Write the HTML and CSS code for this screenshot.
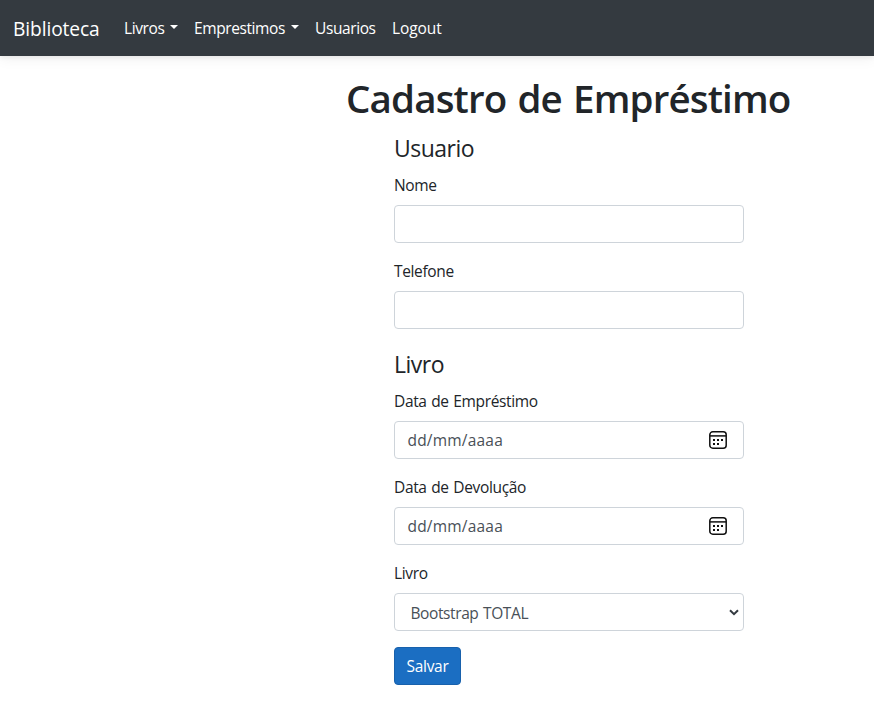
FILE: index.html
```html
<!DOCTYPE html>
<html lang="pt-BR">
<head>
<meta charset="utf-8">
<title>Biblioteca</title>
<link rel="stylesheet" href="styles.css">
</head>
<body>
<nav class="navbar">
  <a class="brand">Biblioteca</a>
  <a class="link livros"><span>Livros</span><i class="caret"></i></a>
  <a class="link emprestimos"><span>Emprestimos</span><i class="caret"></i></a>
  <a class="link usuarios"><span>Usuarios</span></a>
  <a class="link logout"><span>Logout</span></a>
</nav>
<main class="content">
  <h1>Cadastro de Empréstimo</h1>
  <form class="form">
    <h4>Usuario</h4>
    <div class="group"><label>Nome</label><input class="control" type="text"></div>
    <div class="group last"><label>Telefone</label><input class="control" type="text"></div>
    <h4>Livro</h4>
    <div class="group"><label>Data de Empréstimo</label>
      <div class="control date"><span>dd/mm/aaaa</span>
        <svg class="calendar" viewBox="0 0 20 20"><rect x="1.8" y="1.8" width="16.4" height="16.4" rx="3"/><path d="M2 5.9h16"/><path class="dots" d="M5 9h2v2H5zM9 9h2v2H9zM13 9h2v2h-2zM5 13h2v2H5zM9 13h2v2H9z"/></svg>
      </div></div>
    <div class="group"><label>Data de Devolução</label>
      <div class="control date"><span>dd/mm/aaaa</span>
        <svg class="calendar" viewBox="0 0 20 20"><rect x="1.8" y="1.8" width="16.4" height="16.4" rx="3"/><path d="M2 5.9h16"/><path class="dots" d="M5 9h2v2H5zM9 9h2v2H9zM13 9h2v2h-2zM5 13h2v2H5zM9 13h2v2H9z"/></svg>
      </div></div>
    <div class="group"><label>Livro</label>
      <div class="control select"><span>Bootstrap TOTAL</span>
        <svg class="arrow" viewBox="0 0 10 7"><path d="M1 1.2l4 4 4-4"/></svg>
      </div></div>
    <button class="save" type="button">Salvar</button>
  </form>
</main>
</body>
</html>
```

FILE: styles.css
```css
* { box-sizing: border-box; }
body { margin: 0; background: #fff; color: #212529; font: 15.5px/24px "Open Sans", "Noto Sans", sans-serif; }
.navbar { display: flex; align-items: center; height: 56px; padding-left: 13px; background: #343a40; color: #fff; box-shadow: 0 2px 4px rgba(0,0,0,.06), 0 4px 12px rgba(0,0,0,.05); white-space: nowrap; }
.brand { width: 111px; padding-top: 1px; font-size: 19.2px; line-height: 30px; letter-spacing: -.1px; }
.link { display: flex; align-items: center; letter-spacing: -.4px; }
.livros { width: 70px; }
.emprestimos { width: 121px; }
.usuarios { width: 77px; }
.logout { letter-spacing: -.1px; }
.caret { margin: -2px 16px 0 auto; border: 4.8px solid transparent; border-top-color: #fff; border-bottom: 0; }
.content { padding: 18px 0 0 346px; }
h1 { margin: 0 0 12px; font-size: 38.5px; line-height: 48px; font-weight: 600; letter-spacing: -.85px; word-spacing: 2px; white-space: nowrap; }
.form { width: 350px; margin-left: 48px; }
h4 { margin: 0 0 10px; font-size: 23px; line-height: 29px; font-weight: 400; letter-spacing: -.5px; }
.group { margin-bottom: 16px; }
.last { margin-bottom: 21px; }
label { display: block; margin-bottom: 8px; letter-spacing: -.36px; word-spacing: 1px; }
.control { display: flex; align-items: center; width: 100%; height: 38px; padding: 0 12px; border: 1px solid #ced4da; border-radius: 4px; background: #fff; color: #495057; }
.date { justify-content: space-between; padding: 0 15px 0 12.5px; letter-spacing: .2px; }
.calendar { width: 20px; height: 20px; fill: none; stroke: #111; stroke-width: 1.5; }
.calendar .dots { fill: #111; stroke: none; }
.select { justify-content: space-between; padding: 1px 4px 0 15.5px; letter-spacing: -.4px; word-spacing: 1px; }
.arrow { width: 10px; height: 7px; fill: none; stroke: #343a40; stroke-width: 2; }
.save { display: block; width: 67px; height: 38px; padding: 0; border: 1px solid #1861ac; border-radius: 4px; background: #1b6ec2; color: #fff; font: inherit; letter-spacing: -.3px; }
```
